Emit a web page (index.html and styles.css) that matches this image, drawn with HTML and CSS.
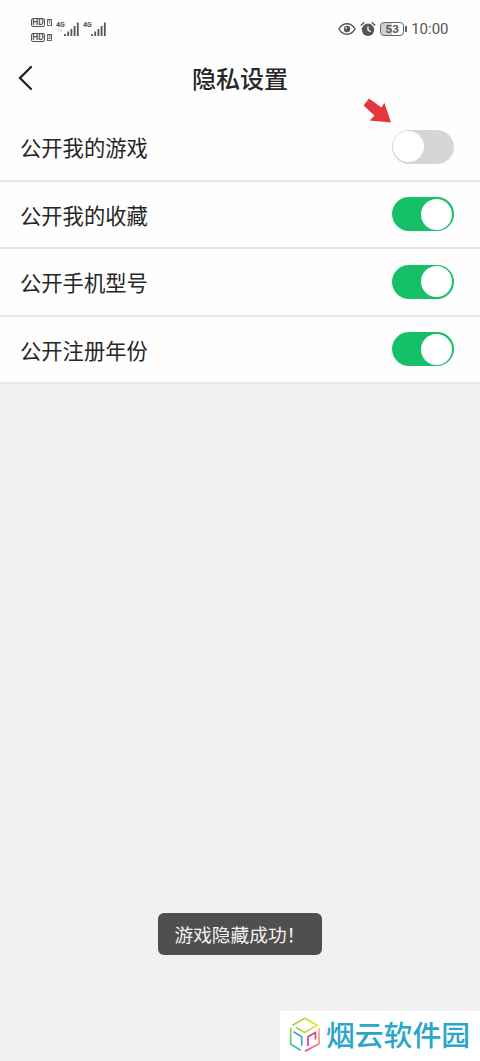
FILE: index.html
```html
<!DOCTYPE html>
<html lang="zh-CN">
<head>
<meta charset="utf-8">
<title>隐私设置</title>
<link rel="stylesheet" href="styles.css">
</head>
<body>
<main class="screen">
  <div class="status">
    <div class="status-left">
      <div class="hd-stack">
        <div class="hd"><span class="hd-box">HD</span><span class="sim">1</span></div>
        <div class="hd"><span class="hd-box">HD</span><span class="sim">2</span></div>
      </div>
      <svg class="signal" width="24" height="18" viewBox="0 0 24 18">
        <text class="net" x="0" y="6.5">4G</text>
        <path class="faint" d="M2 10.500h4"/>
        <path class="bars" d="M9 14v2M12.200 11.500v4.500M15.400 9v7M18.600 6v10M21.800 2.500v13.500"/>
      </svg>
      <svg class="signal signal-second" width="24" height="18" viewBox="0 0 24 18">
        <text class="net" x="0" y="6.5">4G</text>
        <path class="bars" d="M9 14v2M12.200 11.500v4.500M15.400 9v7M18.600 6v10M21.800 2.500v13.500"/>
      </svg>
    </div>
    <div class="status-right">
      <svg width="18" height="14" viewBox="0 0 18 14">
        <path class="line" d="M1 7C3 3.300 6 1.800 9 1.800S15 3.300 17 7c-2 3.700-5 5.200-8 5.200S3 10.700 1 7z"/>
        <circle class="solid" cx="9" cy="7" r="3.200"/>
        <circle class="glint" cx="8" cy="6" r="0.900"/>
      </svg>
      <svg class="alarm" width="16" height="16" viewBox="0 0 16 16">
        <circle class="solid" cx="8" cy="8.800" r="6.200"/>
        <path class="line" d="M0.800 4.500 4.300 1.300M11.700 1.300 15.200 4.500"/>
        <path class="hand" d="M8 5.500v3.600l2.700 1.700"/>
      </svg>
      <div class="battery"><span>53</span></div>
      <i class="battery-tip"></i>
      <time class="clock">10:00</time>
    </div>
  </div>

  <header class="header">
    <svg class="back" width="16" height="26" viewBox="0 0 16 26"><path d="M13 2 2 13 13 24"/></svg>
    <h1>隐私设置</h1>
  </header>

  <section class="list">
    <div class="row"><span>公开我的游戏</span>
      <div class="switch off"><i></i>
        <svg class="pointer" width="30" height="26" viewBox="0 0 30 26"><path d="M6 0.500 18.500 9.500 21.300 4.800 28 24.500 6.600 22.500 11.500 17.500 0.500 7.500z"/></svg>
      </div>
    </div>
    <div class="row"><span>公开我的收藏</span><div class="switch"><i></i></div></div>
    <div class="row"><span>公开手机型号</span><div class="switch"><i></i></div></div>
    <div class="row"><span>公开注册年份</span><div class="switch"><i></i></div></div>
  </section>

  <div class="toast">游戏隐藏成功！</div>

  <div class="watermark">
    <svg width="32" height="36" viewBox="0 0 32 36">
      <defs>
        <linearGradient id="top" x1="0" x2="1"><stop offset="0" stop-color="#8fd34b"/><stop offset="1" stop-color="#f3e035"/></linearGradient>
        <linearGradient id="left" x1="0" y1="0" x2="0" y2="1"><stop offset="0" stop-color="#a5d84b"/><stop offset="1" stop-color="#35b3b8"/></linearGradient>
        <linearGradient id="right" x1="0" y1="1" x2="1" y2="0"><stop offset="0" stop-color="#e5479b"/><stop offset="1" stop-color="#f6b35d"/></linearGradient>
      </defs>
      <path stroke="url(#top)" d="M3.500 8.300 15.700 1.300 28.300 8.300 15.700 15.500 7 10.500"/>
      <path stroke="url(#left)" d="M1.700 10.700V27.300L11.700 33.300"/>
      <path stroke="#2fa9cc" d="M4.500 14.700 12.700 19.700V28.500"/>
      <path stroke="url(#right)" d="M30 11.300V26.700L16 34.300"/>
      <path stroke="#dc3d98" d="M19 29V19.700L26.500 15.500V22.500"/>
    </svg>
    <span>烟云软件园</span>
  </div>
</main>
</body>
</html>
```

FILE: styles.css
```css
* { box-sizing: border-box; }

body {
  margin: 0;
  background: #f1f1f1;
  color: #262626;
  font-family: "Noto Sans CJK SC", sans-serif;
}

svg { display: block; fill: none; flex: none; }

.screen {
  position: relative;
  height: 1061px;
  display: flex;
  flex-direction: column;
  overflow: hidden;
}

.status {
  height: 52px;
  padding: 6px 31.5px 0 31px;
  display: flex;
  align-items: center;
  justify-content: space-between;
  background: #fefefe;
  color: #555;
}

.status-left, .status-right { display: flex; align-items: center; }

.hd-stack { display: flex; flex-direction: column; gap: 5px; width: 25px; padding-top: 1px; }
.hd { display: flex; align-items: center; gap: 2px; height: 10px; }
.hd-box {
  width: 14px;
  height: 9px;
  border: 1px solid #555;
  border-radius: 2px;
  font: bold 8.5px/7px Roboto, sans-serif;
  text-align: center;
}
.sim {
  width: 5px;
  height: 7px;
  border: 1px solid #666;
  font: bold 5px/5px Roboto, sans-serif;
  text-align: center;
}

.signal { margin-top: -1px; }
.signal-second { margin-left: 3px; }
.net { fill: #555; font: bold 7px Roboto, sans-serif; }
.bars { stroke: #555; stroke-width: 1.8; }
.faint { stroke: #ddd; stroke-width: 2; }

.line { stroke: #555; stroke-width: 1.5; }
.solid { fill: #555; }
.glint { fill: #eee; }
.hand { stroke: #fff; stroke-width: 1.3; }
.alarm { margin: 0 4px; }

.battery {
  width: 24px;
  height: 14px;
  border: 1.5px solid #666;
  border-radius: 4px;
  font: bold 11.5px/12px Roboto, sans-serif;
  text-align: center;
  background: linear-gradient(90deg, #d0d0d0 50%, #fefefe 50%);
}
.battery span { display: block; }
.battery-tip { width: 2px; height: 6px; margin-left: 1px; background: #666; }
.clock { margin-left: 4px; font: 15px/20px Roboto, sans-serif; }

.header {
  height: 62px;
  padding-bottom: 10px;
  display: grid;
  grid-template-columns: 40px 1fr 40px;
  align-items: center;
  background: #fefefe;
}
.back { margin-left: 17.5px; stroke: #222; stroke-width: 2.3; stroke-linecap: round; }
h1 { margin: -1px 0 0; font-size: 24px; line-height: 36px; font-weight: 500; text-align: center; }

.list { background: #fefefe; }
.row {
  height: 67.5px;
  padding: 0 26.5px 0 20px;
  display: flex;
  align-items: center;
  justify-content: space-between;
  border-bottom: 2px solid #e6e6e6;
  font-size: 21.3px;
}

.switch {
  position: relative;
  width: 62px;
  height: 34px;
  padding: 1.5px;
  display: flex;
  justify-content: flex-end;
  border-radius: 17px;
  background: #16c068;
}
.switch.off { justify-content: flex-start; background: #d6d6d6; }
.switch i { width: 31px; height: 31px; border-radius: 50%; background: #fff; }
.pointer { position: absolute; left: -29px; top: -32px; fill: #e5353d; }

.toast {
  position: absolute;
  left: 158px;
  top: 913px;
  width: 163.5px;
  height: 41.5px;
  padding-left: 16.5px;
  border-radius: 6px;
  background: #4f4f4f;
  color: #f2f2f2;
  font-size: 18.7px;
  line-height: 42px;
  white-space: nowrap;
}

.watermark {
  position: absolute;
  right: 0;
  bottom: 0;
  width: 200px;
  height: 50px;
  padding-left: 9px;
  display: flex;
  align-items: center;
  gap: 5px;
  background: #fff;
  color: #2ba6c9;
  font-size: 28.8px;
  font-weight: 500;
  line-height: 46px;
  white-space: nowrap;
}
.watermark span { margin-top: -4px; }
.watermark svg { stroke-width: 1.7; margin-top: -2px; }
```
